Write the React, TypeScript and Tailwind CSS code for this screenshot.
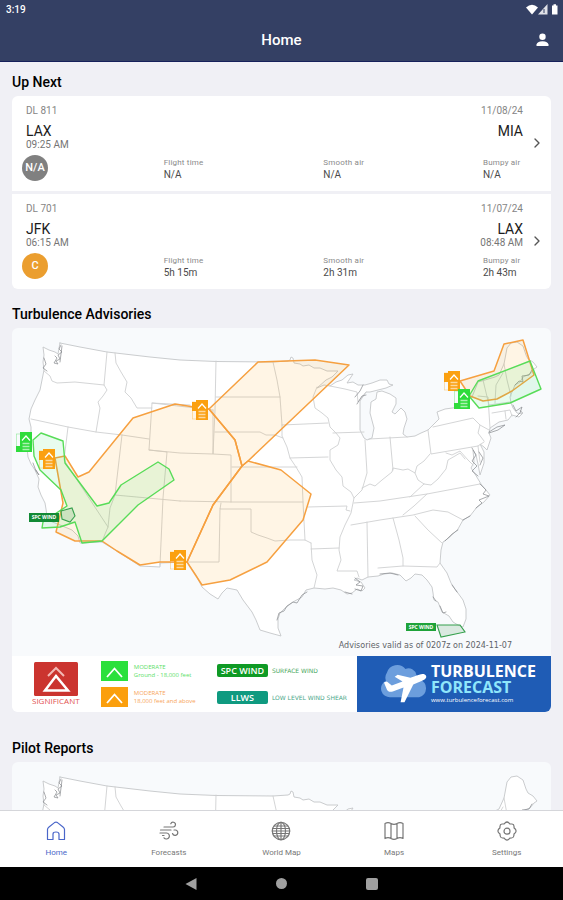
import type { ReactNode } from 'react'
import { ChevronRight } from 'lucide-react'

type Flight = {
  number: string
  date: string
  from: string
  to: string
  departs: string
  arrives: string
  grade: string
  gradeColor: string
  stats: { label: string; value: string }[]
}

const flights: Flight[] = [
  {
    number: 'DL 811', date: '11/08/24', from: 'LAX', to: 'MIA', departs: '09:25 AM', arrives: '',
    grade: 'N/A', gradeColor: 'bg-[#808080]',
    stats: [
      { label: 'Flight time', value: 'N/A' },
      { label: 'Smooth air', value: 'N/A' },
      { label: 'Bumpy air', value: 'N/A' },
    ],
  },
  {
    number: 'DL 701', date: '11/07/24', from: 'JFK', to: 'LAX', departs: '06:15 AM', arrives: '08:48 AM',
    grade: 'C', gradeColor: 'bg-[#eb9e2f]',
    stats: [
      { label: 'Flight time', value: '5h 15m' },
      { label: 'Smooth air', value: '2h 31m' },
      { label: 'Bumpy air', value: '2h 43m' },
    ],
  },
]

const COUNTRY =
  'M60 343L80 347L107 352L150 357L180 360L216 361.5L273 362L288 361L290 360L291 357L293 358L294 363L300 364L303 366L309 365L314 368L320 368L327 371L338 371L332 377L326 380L317 388L324 385L330 386L336 382L342 380L348 375L353 374L349 380L347 383L353 382L358 385L365 385L372 383L380 380L387 380L389 384L393 385L386 388L378 390L370 392L366 392L360 401L360 415L360 430L364 438L367 440L372 438L374 428L370 413L371 402L376 399L377 392L382 391L390 394L396 398L396 404L392 412L395 414L401 408L405 412L407 419L404 428L403 434L407 437L415 436L421 433L428 430L434 424L439 419L437 412L445 409L460 407L466 402L472 397L478 382L485 380L495 377L499 375L504 364L507 348L511 343L517 342L520 344L523 346L526 355L528 359L533 362L537 367L534 369L530 374L523 377L520 382L515 385L512 392L510 397L511 403L513 408L517 413L522 414L520 410L523 413L519 417L512 415L508 420L499 422L490 428L489 433L491 438L487 450L484 447L480 444L484 452L484 463L480 475L478 464L476 455L473 450L474 462L471 468L475 474L478 479L481 484L486 490L490 495L484 502L477 507L470 516L463 520L458 529L450 537L443 542L441 550L440 563L447 573L451 583L455 589L463 600L466 609L466 619L463 627L458 625L453 622L449 616L442 612L438 602L434 600L433 593L432 587L427 580L422 575L415 574L411 578L406 581L403 578L400 575L392 573L384 574L378 576L368 577L362 580L357 578L354 580L361 582L365 588L362 591L357 589L352 593L347 594L341 590L333 588L325 589L314 588L306 590L302 597L293 602L285 608L280 613L278 619L278 628L281 636L270 633L260 630L256 620L252 612L243 600L237 590L227 588L222 593L218 599L210 594L202 587L196 575L187 562L160 563L160 567L140 566L120 553L102 542L80 543L78 536L72 530L60 525L50 521L47 517L46 509L45 503L41 495L38 487L39 479L35 470L31 464L28 457L27 447L31 440L31 427L29 419L31 409L35 400L40 390L42 380L44 370L43 362L44 355L43 347L49 350L55 352L58 354L60 343Z'

const STATES = [
  'M44 371L50 376L52 381L57 383L75 382L104 385',
  'M107 352L104 385L107 390L103 396L98 402L100 408L96 432',
  'M31 419L68 427L96 432L122 435L149 439',
  'M68 427L64 460L108 527L105 534L102 542',
  'M115 353L116 363L121 372L127 382L125 392L131 398L137 408L152 408',
  'M190 405L152 403L149 450L180 453L213 454L213 410',
  'M152 403L213 410',
  'M216 361L215 410L213 454L231 455L231 502',
  'M216 397L280 397',
  'M215 432L260 432L266 435L275 435L283 438',
  'M273 362L277 380L280 397L282 425L282 436L287 447L290 458L296 467L302 477L303 502L305 540',
  'M282 425L328 423',
  'M290 458L328 457',
  'M317 387L313 397L315 408L322 413L328 418L330 427L336 433L340 438L338 445L330 450L330 460L336 470L342 477L343 486L351 492L354 498L351 513L345 525L340 537L339 550L341 560L337 571L357 571L359 577',
  'M330 386L345 389L357 392L358 402L366 392',
  'M333 433L364 432',
  'M365 440L367 473L362 490L354 498',
  'M362 488L370 484L375 486L382 480L392 472L393 468L403 470L408 469L415 473L417 466L424 461L430 454',
  'M390 437L393 470',
  'M369 439L407 437',
  'M428 430L431 454L478 446L484 442',
  'M433 427L473 418L480 425L478 433L484 441',
  'M480 425L489 430',
  'M478 446L480 462',
  'M415 473L418 480L424 484L431 485L438 479L446 469L448 460L455 456L460 453L465 459',
  'M446 453L452 455L460 451L468 460L473 465',
  'M424 484L410 497',
  'M354 503L380 501L427 494L480 484',
  'M351 525L380 520L413 515L433 510L448 512L463 520',
  'M427 494L414 506L403 515',
  'M415 516L428 530L442 543',
  'M393 518L399 540L403 558L403 566',
  'M367 522L368 577',
  'M378 568L403 566L437 567L440 563',
  'M308 507L347 506L346 510L350 511',
  'M232 467L297 467',
  'M180 501L231 502L303 502',
  'M122 435L115 495L180 501',
  'M115 495L110 508L108 527',
  'M149 450L167 452L163 498L160 565',
  'M221 503L220 509L251 509L251 532L258 535L267 538L275 541L290 540L305 540L311 543',
  'M220 509L219 562L187 562',
  'M311 543L312 560L317 575L314 588',
  'M311 549L339 548',
  'M478 396L488 397L490 428',
  'M483 380L489 405L510 402',
  'M492 413L510 410L512 416',
  'M503 373L496 385L495 403',
  'M504 364L507 380L511 396',
  'M505 411L506 419',
]

// rougher bits of shoreline that read darker than the state borders
const COAST = [
  'M61 345L59 349L62 352L58 355L60 359L56 361L58 364L54 363L57 358L55 356M62 346L60 362',
  'M44 358L46 364L43 368L47 371',
  'M472 448L476 455L472 461L477 466L472 471L478 476M479 452L483 458L480 465',
  'M480 484L486 490L483 494L489 496L479 500L482 503L476 508',
  'M470 516L463 520M458 530L452 534L445 541',
  'M489 432L497 427L505 425L498 430L489 433',
  'M513 405L516 411L522 407L520 413L516 417',
  'M515 385L519 381L523 382L522 376L529 375L532 370',
  'M277 620L279 613L284 611L287 606L293 602L297 603L302 595L307 592',
  'M355 578L360 582L356 585L363 586L361 591L355 589M345 592L352 594',
  'M380 574L390 573L398 575M440 606L443 613L446 612',
  'M452 585L457 592M433 597L436 601',
  'M33 463L36 471L39 475L36 470',
  'M355 397L360 391L363 385M357 404L362 396L366 395',
]

function UsMap() {
  return (
    <g strokeLinejoin="round" strokeLinecap="round">
      <path d={COUNTRY} fill="#fff" stroke="#c4c6c8" strokeWidth="0.9" />
      <path d={STATES.join('')} fill="none" stroke="#cfd0d1" strokeWidth="0.9" />
      <path d={COAST.join('')} fill="none" stroke="#85888c" strokeWidth="0.7" />
    </g>
  )
}

function MapPin({ x, y, color, tail }: { x: number; y: number; color: string; tail: 'top' | 'bottom' }) {
  return (
    <g transform={`translate(${x} ${y})`}>
      <rect x="-4" y={tail === 'top' ? 2 : 14} width="6" height={tail === 'top' ? 9 : 6} fill={color} />
      <rect x="-3.5" y="2" width="5" height="17" fill="none" stroke={color} strokeWidth="0.6" opacity="0.5" />
      <rect width="12" height="20" fill={color} />
      <path d="M2 8.500L6 4L10 8.500" fill="none" stroke="#fff" strokeWidth="1.200" />
      <path d="M2.500 11.500H9.500M2.500 14.500H9.500M2.500 17.500H9.500" stroke="#fff" strokeWidth="1.500" opacity="0.600" />
    </g>
  )
}

function AdvisoryMap() {
  return (
    <svg viewBox="12 328 539 328" className="block w-full" role="img" aria-label="Turbulence advisories map">
      <UsMap />
      <g fill="#ffa000" fillOpacity="0.1" stroke="#f6a040" strokeWidth="1.5" strokeLinejoin="round">
        <path d="M209 409L194 407L175 404L133 418L89 472L78 477L65 456L55 458L63 503L56 532L75 541L102 541L117 551L140 565L160 562L187 562L213 505L242 466L235 440Z" />
        <path d="M209 409L258 362L315 360L349 365L248 461L242 466L235 440Z" />
        <path d="M248 461L281 470L311 494L303 520L267 562L230 580L202 585L187 562L213 505L242 466Z" />
        <path d="M460 381L494 371L504 344L523 340L534 375L512 391L497 399L483 401L470 396Z" />
      </g>
      <g fill="#30e060" fillOpacity="0.11" stroke="#58dc58" strokeWidth="1.4" strokeLinejoin="round">
        <path d="M33 440L41 433L63 441L65 463L97 506L109 503L121 485L158 462L169 469L174 480L138 505L102 541L82 543L75 522L60 527L42 528L43 522L67 506L61 490L40 470L34 456Z" />
        <path d="M478 381L530 361L541 389L510 403L479 408L469 396Z" />
      </g>
      <g fill="#2f8f45" fillOpacity="0.15" stroke="#35a04c" strokeWidth="1.1">
        <path d="M61 511L72 508L75 516L70 522L62 519Z" />
        <path d="M437 625L460 625L465 632L441 637Z" />
      </g>
      <MapPin x={196} y={400} color="#fba010" tail="top" />
      <MapPin x={43} y={449} color="#fba010" tail="top" />
      <MapPin x={174} y={550} color="#fba010" tail="top" />
      <MapPin x={448} y={371} color="#fba010" tail="top" />
      <MapPin x={20} y={432} color="#2fdc3c" tail="bottom" />
      <MapPin x={458} y={389} color="#2fdc3c" tail="bottom" />
      <rect x="29" y="513" width="30" height="9" fill="#128a35" />
      <text x="44" y="519" textAnchor="middle" fill="#fff" className="font-['Open_Sans',sans-serif] text-[5px] font-bold">SPC WIND</text>
      <rect x="406" y="623" width="30" height="8" fill="#1fa33a" />
      <text x="421" y="629" textAnchor="middle" fill="#fff" className="font-['Open_Sans',sans-serif] text-[5px] font-bold">SPC WIND</text>
      <text x="512" y="648" textAnchor="end" fill="#606368" className="font-['DejaVu_Sans',sans-serif] text-[8px]">
        Advisories valid as of 0207z on 2024-11-07
      </text>
    </svg>
  )
}

function Legend() {
  return (
    <div className="flex h-14 bg-white font-['Open_Sans',sans-serif]">
      <div className="flex min-w-0 flex-1 items-center justify-between pl-5 pr-2.5">
        <div className="flex flex-col items-center">
          <svg viewBox="0 0 44 34" className="w-11">
            <rect width="44" height="34" rx="1.500" fill="#cb342f" />
            <path d="M22 14L11 28.500H34L22 14Z" fill="none" stroke="#fff" strokeWidth="2.500" />
            <path d="M14 14L22 6L30 14" fill="none" stroke="#f3b9b5" strokeWidth="2" />
          </svg>
          <span className="text-[8px] leading-[10px] text-[#e2524f]">SIGNIFICANT</span>
        </div>
        <div className="flex flex-col gap-1.5">
          <LegendLevel color="#2be03c" textClass="text-[#5ce068]" range="Ground - 18,000 feet" />
          <LegendLevel color="#fb9f0d" textClass="text-[#f7a55a]" range="18,000 feet and above" />
        </div>
        <div className="flex flex-col gap-3.5">
          <div className="flex items-center gap-1">
            <span className="w-[51px] rounded-xs bg-[#0f9a25] text-center text-[9px] leading-[13px] font-semibold text-white">SPC WIND</span>
            <span className="font-['DejaVu_Sans',sans-serif] text-[6px] leading-2 text-[#4ba860]">SURFACE WIND</span>
          </div>
          <div className="flex items-center gap-1">
            <span className="w-[51px] rounded-xs bg-[#0f9a80] text-center text-[9px] leading-[13px] font-semibold text-white">LLWS</span>
            <span className="font-['DejaVu_Sans',sans-serif] text-[6px] leading-2 whitespace-nowrap text-[#4ba88a]">LOW LEVEL WIND SHEAR</span>
          </div>
        </div>
      </div>
      <div className="flex w-[36%] items-center gap-1 bg-[#1f5cb5] pl-6">
        <svg viewBox="0 0 47 40" className="w-[46px] shrink-0">
          <path d="M10 34a9 9 0 0 1-5-17 9 9 0 0 1 1-8A11 11 0 0 1 25 5a8 8 0 0 1 11 6 9 9 0 0 1 4 5 9.500 9.500 0 0 1-1 18Z" fill="#6c9edd" />
          <path d="M46 12c1 2-1 4-4 5l-9 4-9 18h-4l3-15-11 4c-3 1-5 0-6-2L3 19l3-1 5 4 11-4-8-5 3-2 13 3 9-3c3-1 6-1 7 1Z" fill="#fff" />
        </svg>
        <div className="flex flex-col">
          <span className="text-base leading-4 font-bold text-white">TURBULENCE</span>
          <span className="text-base leading-4 font-bold text-[#8fe6fb]">FORECAST</span>
          <span className="text-[6px] leading-[10px] text-white">www.turbulenceforecast.com</span>
        </div>
      </div>
    </div>
  )
}

function LegendLevel({ color, textClass, range }: { color: string; textClass: string; range: string }) {
  return (
    <div className="flex items-center gap-1.5">
      <svg viewBox="0 0 27 20" className="w-[27px]">
        <rect width="27" height="20" fill={color} />
        <path d="M6 16L13.500 7.500L21 16" fill="none" stroke="#fff" strokeWidth="1.800" />
      </svg>
      <div className={`flex flex-col text-[6px] leading-2 whitespace-nowrap ${textClass}`}>
        <span>MODERATE</span>
        <span>{range}</span>
      </div>
    </div>
  )
}

function FlightCard({ flight }: { flight: Flight }) {
  return (
    <a href="#" className="flex items-center bg-white pt-[9px] pb-2.5 pl-3.5 pr-1.5">
      <div className="flex-1">
        <div className="flex justify-between text-[10px] leading-3 text-[#858585]">
          <span>{flight.number}</span>
          <span>{flight.date}</span>
        </div>
        <div className="mt-1.5 flex justify-between text-sm leading-4 text-[#1c1c1c]">
          <span>{flight.from}</span>
          <span>{flight.to}</span>
        </div>
        <div className="flex h-3 justify-between text-[10px] leading-3 text-[#757575]">
          <span>{flight.departs}</span>
          <span>{flight.arrives}</span>
        </div>
        <div className="mt-1 flex items-end justify-between">
          <span className={`-ml-1 flex size-[26px] items-center justify-center rounded-full text-[11px] font-medium text-white ${flight.gradeColor}`}>
            {flight.grade}
          </span>
          {flight.stats.map(s => (
            <div key={s.label} className="w-11 whitespace-nowrap last:w-10">
              <p className="text-[8px] leading-3 tracking-wide text-[#8a8a8a]">{s.label}</p>
              <p className="text-[10px] leading-3 text-[#4a4a4a]">{s.value}</p>
            </div>
          ))}
        </div>
      </div>
      <ChevronRight className="ml-1.5 size-4 text-[#555]" strokeWidth={2} />
    </a>
  )
}

const tabs: { label: string; icon: ReactNode }[] = [
  { label: 'Home', icon: <path d="M1.500 8.500C1.500 7.500 2 6.800 3 6L8.500 1.600Q10 .6 11.500 1.600L17 6C18 6.800 18.500 7.500 18.500 8.500V18.500H13V13Q13 11 10 11T7 13V18.500H1.500Z" /> },
  { label: 'Forecasts', icon: <path d="M5 6H14A2.400 2.400 0 1 0 11.800 2.800M1.500 9H12M1 12H7.500A3 3 0 1 1 5 16.800M3.500 14.500H5M15 9H16.300A2.700 2.700 0 1 1 13.500 12.500" /> },
  { label: 'World Map', icon: <><circle cx="10" cy="10" r="8.700" /><ellipse cx="10" cy="10" rx="4.500" ry="8.700" /><path d="M10 1.300V18.700M1.300 10H18.700M3 5H17M3 15H17M1.800 7.500H18.200M1.800 12.500H18.200" /></> },
  { label: 'Maps', icon: <path d="M1 2.500Q4 .8 7 2.500T13 2.500T19 2.500V17.500Q16 15.800 13 17.500T7 17.500T1 17.500ZM7 2.500V17.500M13 2.500V17.500" /> },
  { label: 'Settings', icon: <><path d="M8.200 1.800Q10 .2 11.800 1.800L13 3L15 3Q17 3.200 17 5.200L17.100 7L18.500 8.300Q19.600 10 18.400 11.600L17 13L16.800 15Q16.400 17 14.500 17L12.800 17.200L11.500 18.600Q10 19.700 8.500 18.600L7.200 17.200L5.500 17Q3.600 17 3.200 15L3 13L1.600 11.600Q.4 10 1.500 8.300L2.900 7L3 5.200Q3 3.200 5 3L7 3Z" /><circle cx="10" cy="10.200" r="3" /></> },
]

export default function App() {
  return (
    <div className="flex h-screen flex-col bg-[#f0f0f5] font-[Roboto,sans-serif] text-black">
      <header className="shrink-0 border-b border-[#16205a] bg-[#344064] text-white">
        <div className="flex h-[19px] items-center justify-between pl-1.5 pr-1 text-[10px] font-medium">
          <span>3:19</span>
          <svg viewBox="0 0 33 11" className="h-[11px]" fill="#fff">
            <path d="M0 3.500Q6 -2 12 3.500L6 10.500Z" />
            <path d="M21.500 0V10.500H12Z" opacity="0.850" />
            <path d="M18 5V9" stroke="#344064" strokeWidth="1" />
            <path d="M26 1.500H27.500V.3H30V1.500H31.500V10.500H26Z" />
          </svg>
        </div>
        <div className="grid h-[42px] grid-cols-3 items-center px-3.5">
          <h1 className="col-start-2 text-center text-[15px] font-medium">Home</h1>
          <button aria-label="Account" className="justify-self-end">
            <svg viewBox="0 0 13 14" className="h-3.5" fill="#fff">
              <circle cx="6.500" cy="3.700" r="3.200" />
              <path d="M.5 13V11.500Q1 8.500 6.500 8.200Q12 8.500 12.500 11.500V13Z" />
            </svg>
          </button>
        </div>
      </header>

      <main className="min-h-0 flex-1 overflow-hidden px-3">
        <h2 className="pt-2.5 text-sm font-medium">Up Next</h2>
        <div className="mt-1 flex flex-col gap-[3px] overflow-hidden rounded-md">
          {flights.map(f => <FlightCard key={f.number} flight={f} />)}
        </div>

        <h2 className="mt-[15px] text-sm font-medium">Turbulence Advisories</h2>
        <div className="mt-1 overflow-hidden rounded-md bg-[#f8fafc]">
          <AdvisoryMap />
          <Legend />
        </div>

        <h2 className="mt-[26px] text-sm font-medium">Pilot Reports</h2>
        <div className="mt-1 overflow-hidden rounded-md bg-[#f8fafc]">
          <svg viewBox="12 328 539 328" className="block w-full" role="img" aria-label="Pilot reports map">
            <UsMap />
          </svg>
        </div>
      </main>

      <nav className="grid h-[57px] shrink-0 grid-cols-5 border-t border-[#d5d6da] bg-white">
        {tabs.map(t => (
          <a key={t.label} href="#"
            className={`flex flex-col items-center pt-2.5 ${t.label === 'Home' ? 'text-[#4a66c9]' : 'text-[#777]'}`}>
            <svg viewBox="0 0 20 20" className="size-5" fill="none" stroke="currentColor" strokeWidth="1.200" strokeLinecap="round" strokeLinejoin="round">
              {t.icon}
            </svg>
            <span className="mt-1.5 text-[8px] leading-3">{t.label}</span>
          </a>
        ))}
      </nav>

      <div className="flex h-[33px] shrink-0 items-center justify-center gap-[79px] bg-black">
        <button aria-label="Back">
          <svg viewBox="0 0 12 12" className="size-3" fill="#a0a0a0"><path d="M11.500 0V12L.5 6Z" /></svg>
        </button>
        <button aria-label="Home screen" className="size-[11px] rounded-full bg-[#a0a0a0]" />
        <button aria-label="Recent apps" className="size-3 rounded-xs bg-[#a0a0a0]" />
      </div>
    </div>
  )
}
